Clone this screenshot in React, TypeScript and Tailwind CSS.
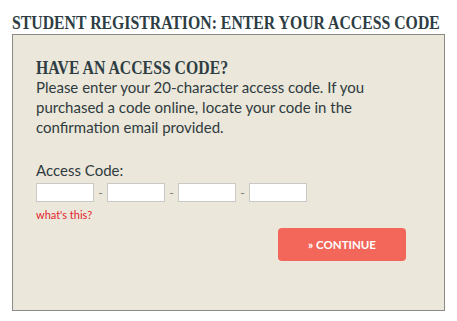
const slab = "font-['Liberation_Serif',serif] font-bold uppercase text-[#2d3d43]";
const body = "font-['Lato','Noto_Sans',sans-serif] text-[#2f3b40]";

function CodeInput() {
  return <input type="text" className="h-[19px] w-[58px] border border-[#c9c9c6] bg-white outline-none" />;
}

function Dash() {
  return <span className="w-[13px] text-center text-[13px] leading-[19px] text-[#7f7f7c]">-</span>;
}

export default function App() {
  return (
    <div className="h-[321px] w-[457px] overflow-hidden bg-white">
      <h1 className={`${slab} whitespace-nowrap pl-[12px] pt-[13px] text-[19px] leading-[19px]`}>
        <span className="inline-block origin-left scale-x-[0.83]">Student Registration: Enter Your Access Code</span>
      </h1>

      <div className="ml-[12px] mt-[2px] h-[277px] w-[433px] border border-[#8b8b86] bg-[#ebe7da] pl-[23px] pr-[38px] pt-[23px]">
        <h2 className={`${slab} whitespace-nowrap text-[19px] leading-[19px]`}>
          <span className="inline-block origin-left scale-x-[0.83]">Have an access code?</span>
        </h2>
        <p className={`${body} text-[15px] leading-[20px]`}>
          Please enter your 20-character access code. If you
          <br />
          purchased a code online, locate your code in the
          <br />
          confirmation email provided.
        </p>

        <div className={`${body} mt-[23px] text-[15px] leading-[20px]`}>Access Code:</div>
        <div className="mt-[3px] flex items-center">
          <CodeInput />
          <Dash />
          <CodeInput />
          <Dash />
          <CodeInput />
          <Dash />
          <CodeInput />
        </div>

        <a href="#" className="mt-[6px] block font-['Lato',sans-serif] text-[11px] leading-[13px] text-[#e3242f]">
          what's this?
        </a>

        <div className="mt-[7px] flex justify-end">
          <button
            type="button"
            className="h-[33px] w-[128px] rounded-[4px] bg-[#f26759] font-['Lato',sans-serif] text-[11.5px] font-bold uppercase text-white"
          >
            » Continue
          </button>
        </div>
      </div>
    </div>
  );
}
